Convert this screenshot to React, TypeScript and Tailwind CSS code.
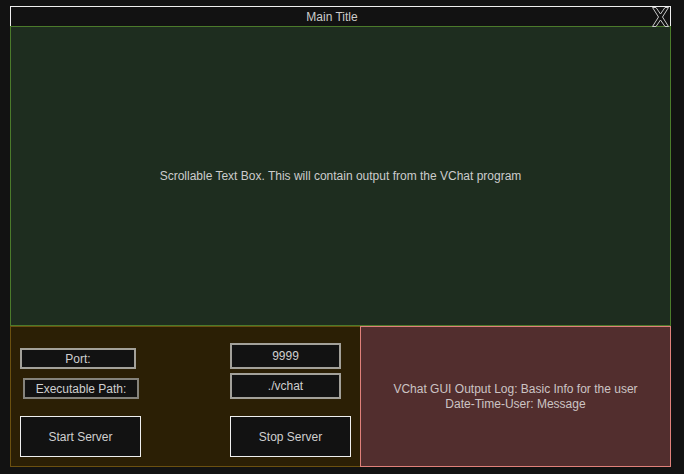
import React from 'react'

const font = { fontFamily: '"Liberation Sans", Arial, sans-serif' }

function CloseGlyph() {
    return (
        <svg width="20" height="20" viewBox="0 0 20 20" className="shrink-0">
            <polygon
                points="2.5,0.5 6,0.5 10.5,7 15,0.5 18.5,0.5 12.5,10 18.5,19.5 15,19.5 10.5,13 6,19.5 2.5,19.5 8.5,10"
                fill="none"
                stroke="#c8c8c8"
                strokeWidth="1"
            />
        </svg>
    )
}

function Field({ children, className }: { children: React.ReactNode; className: string }) {
    return (
        <div className={`flex items-center justify-center bg-[#121212] text-[12px] text-[#cfcfcf] ${className}`}>
            {children}
        </div>
    )
}

export default function App() {
    return (
        <div className="h-[474px] w-[684px] bg-[#121212] px-[10px] pt-[6px]" style={font}>
            <div className="w-[661px]">
                {/* title bar */}
                <div className="flex h-[20px] items-center border-x border-t border-[#f0f0f0]">
                    <div className="flex-1 pl-[3px] text-center text-[12px] leading-none text-[#cccccc]">Main Title</div>
                    <CloseGlyph />
                </div>

                {/* output area */}
                <div className="flex h-[300px] items-center justify-center border border-[#4b7a2b] bg-[#1e2d1f] text-[12px] text-[#cccccc]">
                    Scrollable Text Box. This will contain output from the VChat program
                </div>

                <div className="flex h-[141px]">
                    {/* controls */}
                    <div className="flex w-[350px] border border-r-0 border-[#6b5010] bg-[#2b1f05]">
                        <div className="flex w-[219px] flex-col items-start pl-[9px] pt-[21px]">
                            <Field className="h-[21px] w-[116px] border-2 border-[#a3a19a]">Port:</Field>
                            <Field className="ml-[3px] mt-[9px] h-[21px] w-[116px] border-2 border-[#85837c]">Executable Path:</Field>
                            <Field className="mt-[17px] h-[41px] w-[121px] border border-[#f0f0f0]">Start Server</Field>
                        </div>
                        <div className="flex flex-col items-start pt-[16px]">
                            <Field className="h-[26px] w-[111px] border-2 border-[#a3a19a]">9999</Field>
                            <Field className="mt-[4px] h-[26px] w-[111px] border-2 border-[#a3a19a]">./vchat</Field>
                            <Field className="mt-[17px] h-[41px] w-[121px] border border-[#f0f0f0]">Stop Server</Field>
                        </div>
                    </div>

                    {/* log */}
                    <div className="flex flex-1 flex-col items-center justify-center border border-[#e0817a] bg-[#522e2e] text-[12px] leading-[15px] text-[#ccc4c4]">
                        <div>VChat GUI Output Log: Basic Info for the user</div>
                        <div>Date-Time-User: Message</div>
                    </div>
                </div>
            </div>
        </div>
    )
}
